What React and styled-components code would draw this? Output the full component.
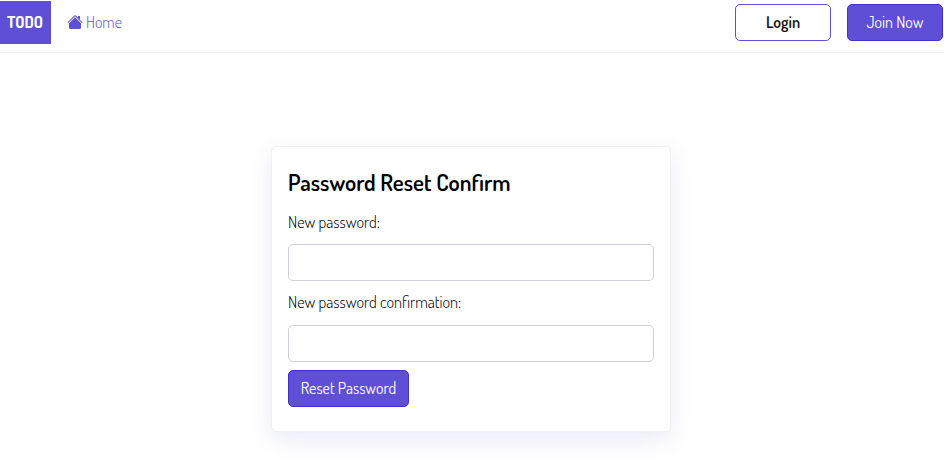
import React from "react";
import styled, { createGlobalStyle } from "styled-components";

const GlobalStyle = createGlobalStyle`
  * { box-sizing: border-box; }
  body {
    margin: 0;
    background: #fff;
    color: #10141a;
    font-family: Dosis, Roboto, "Open Sans", sans-serif;
    font-size: 16px;
    line-height: 24px;
  }
`;

const Page = styled.div`
  min-height: 472px;
`;

const Navbar = styled.header`
  display: flex;
  align-items: flex-start;
  height: 53px;
  border-bottom: 1px solid #f0f0f1;
`;

const Brand = styled.a`
  width: 51px;
  height: 43px;
  margin-top: 1px;
  padding: 0 1px 2px 0;
  display: flex;
  align-items: center;
  justify-content: center;
  background: #5e4fd6;
  color: #fff;
  font-weight: 700;
`;

const HomeLink = styled.a`
  display: flex;
  align-items: flex-start;
  gap: 4px;
  margin: 10px 0 0 16px;
  color: #5e4fd6;
  font-weight: 300;
`;

const HomeIcon = styled.svg`
  width: 16px;
  height: 16px;
  margin: 4px -1px 0 0;
  fill: currentColor;
`;

const Actions = styled.div`
  display: flex;
  gap: 16px;
  margin: 4px 1px 0 auto;
`;

const Button = styled.button`
  width: ${({ $width }) => $width}px;
  height: 37px;
  padding: 0 0 ${({ $lift = 0 }) => $lift}px;
  display: flex;
  align-items: center;
  justify-content: center;
  border: 1px solid ${({ $outline }) => ($outline ? "#5e4fd6" : "#402fcb")};
  border-radius: 5px;
  background: ${({ $outline }) => ($outline ? "#fff" : "#5e4fd6")};
  color: ${({ $outline }) => ($outline ? "#141414" : "#fff")};
  font: inherit;
  font-weight: ${({ $outline }) => ($outline ? 600 : 400)};
  white-space: nowrap;
`;

const Card = styled.form`
  width: 400px;
  height: 286px;
  margin: 93px 0 0 271px;
  padding: 22px 16px;
  border: 1px solid #f0f0f3;
  border-radius: 5px;
  background: #fff;
  box-shadow: 0 8px 24px rgba(80, 90, 190, 0.12);
`;

const Title = styled.h1`
  margin: 0 0 15px;
  color: #000;
  font-size: 23px;
  line-height: 26px;
  font-weight: 600;
`;

const Label = styled.label`
  display: block;
  height: 24px;
  margin-bottom: ${({ $gap }) => $gap}px;
  font-size: 16.35px;
  font-weight: 300;
  color: #000;
`;

const Input = styled.input`
  display: block;
  width: 366px;
  height: 37px;
  margin: 0 0 ${({ $gap }) => $gap}px;
  border: 1px solid #cfd0d7;
  border-radius: 5px;
  background: #fff;
`;

export default function App() {
  return (
    <Page>
      <GlobalStyle />
      <Navbar>
        <Brand>TODO</Brand>
        <HomeLink>
          <HomeIcon viewBox="0 0 16 16" aria-hidden="true">
            <path d="m8 3.293 6 6V13.5a1.5 1.5 0 0 1-1.5 1.5h-9A1.5 1.5 0 0 1 2 13.5V9.293l6-6zm5-.793V6l-2-2V2.5a.5.5 0 0 1 .5-.5h1a.5.5 0 0 1 .5.5z" />
            <path d="M7.293 1.5a1 1 0 0 1 1.414 0l6.647 6.646a.5.5 0 0 1-.708.708L8 2.207 1.354 8.854a.5.5 0 1 1-.708-.708L7.293 1.5z" />
          </HomeIcon>
          <span>Home</span>
        </HomeLink>
        <Actions>
          <Button type="button" $outline $width={96} $lift={2}>Login</Button>
          <Button type="button" $width={96} $lift={2}>Join Now</Button>
        </Actions>
      </Navbar>
      <Card>
        <Title>Password Reset Confirm</Title>
        <Label htmlFor="new-password" $gap={10}>New password:</Label>
        <Input id="new-password" type="password" $gap={9} />
        <Label htmlFor="confirm-password" $gap={11}>New password confirmation:</Label>
        <Input id="confirm-password" type="password" $gap={8} />
        <Button type="submit" $width={121} $lift={1}>Reset Password</Button>
      </Card>
    </Page>
  );
}
